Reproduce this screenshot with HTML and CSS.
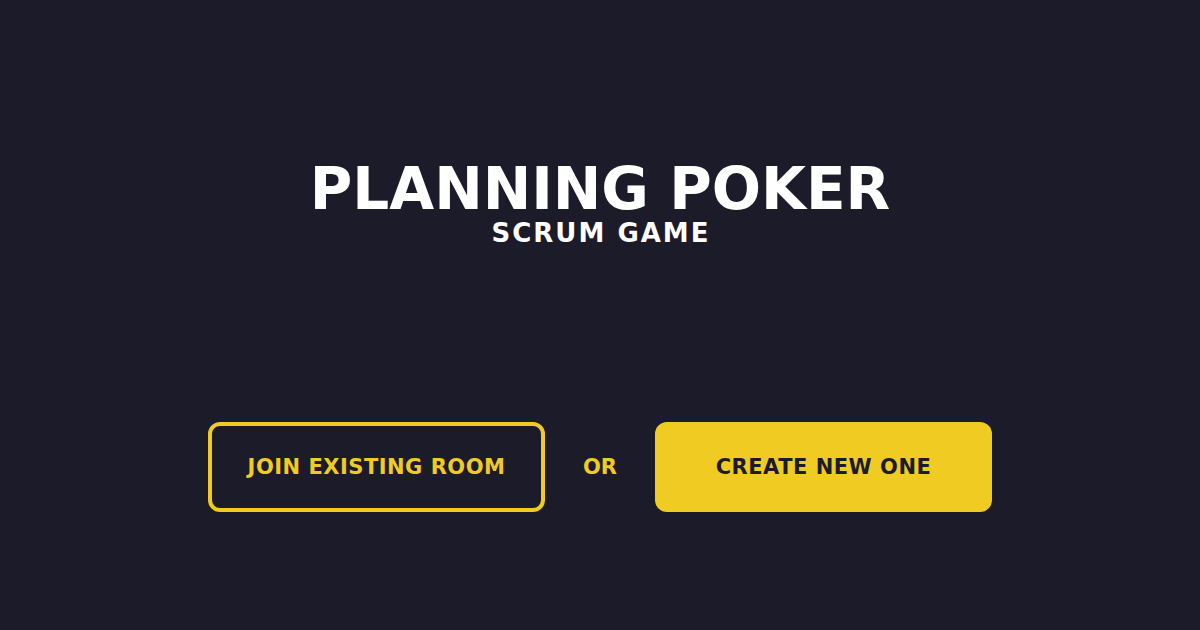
FILE: index.html
```html
<!DOCTYPE html>
<html lang="en">
<head>
<meta charset="utf-8">
<title>Planning Poker</title>
<link rel="stylesheet" href="styles.css">
</head>
<body>
<main class="page">
  <header class="hero">
    <h1 class="title">PLANNING POKER</h1>
    <p class="subtitle">SCRUM GAME</p>
  </header>
  <div class="actions">
    <button class="btn btn-outline" type="button">JOIN EXISTING ROOM</button>
    <span class="or">OR</span>
    <button class="btn btn-solid" type="button">CREATE NEW ONE</button>
  </div>
</main>
</body>
</html>
```
FILE: styles.css
```css
html, body {
  margin: 0;
  padding: 0;
  background: #1c1b2a;
}
body {
  font-family: "DejaVu Sans", "Open Sans", sans-serif;
  width: 1200px;
  height: 630px;
  overflow: hidden;
}
.page {
  display: flex;
  flex-direction: column;
  align-items: center;
  padding-top: 160px;
}
.hero {
  display: flex;
  flex-direction: column;
  align-items: center;
}
.title {
  margin: 0;
  color: #ffffff;
  font-size: 58px;
  font-weight: 700;
  line-height: 58px;
}
.subtitle {
  margin: 0;
  color: #ffffff;
  font-size: 26px;
  font-weight: 700;
  line-height: 30px;
  letter-spacing: 2px;
  padding-left: 2px;
}
.actions {
  display: flex;
  align-items: center;
  margin-top: 174px;
}
.btn {
  width: 337px;
  height: 90px;
  border-radius: 12px;
  font-family: inherit;
  font-size: 21px;
  font-weight: 700;
  letter-spacing: 0.5px;
  box-sizing: border-box;
  cursor: pointer;
  padding: 0;
}
.btn-outline {
  background: transparent;
  border: 4px solid #f0cb22;
  color: #f0cb22;
}
.btn-solid {
  background: #f0cb22;
  border: none;
  color: #1c1b2a;
}
.or {
  width: 110px;
  text-align: center;
  color: #f0cb22;
  font-size: 21px;
  font-weight: 700;
}
```
